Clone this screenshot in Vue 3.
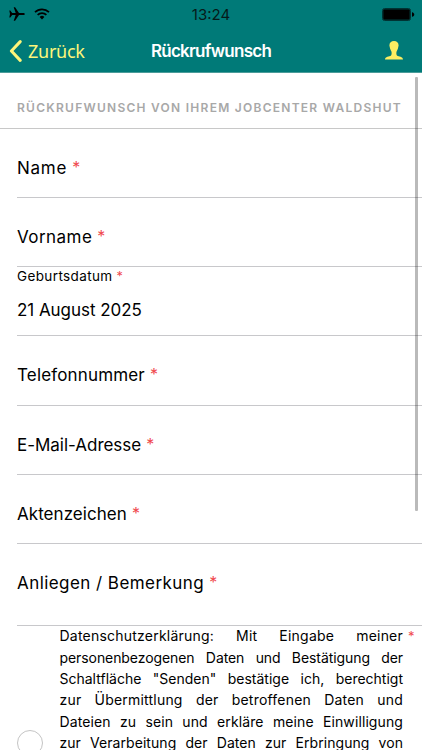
<template>
  <div class="screen">
    <header class="top">
      <div class="status">
        <div class="status-left">
          <svg class="plane" viewBox="0 0 16 14" aria-hidden="true">
            <path d="M.3 3.400h1L3.200 5.900h3.500L4.700.3h1.400L10 5.900h4c1.100 0 1.900.5 1.900 1.100s-.8 1.100-1.900 1.100h-4l-3.900 5.600H4.700l2-5.600H3.200L1.300 10.600h-1L1 7z" />
          </svg>
          <svg class="wifi" viewBox="0 0 16 12" aria-hidden="true">
            <path d="M1 4.200a10 10 0 0 1 14 0M3.600 6.900a6.300 6.300 0 0 1 8.800 0" />
            <path class="wifi-dot" d="M5.600 9a3.500 3.500 0 0 1 4.800 0L8 11.600z" />
          </svg>
        </div>
        <span class="clock">13:24</span>
        <svg class="battery" viewBox="0 0 33 13" aria-hidden="true">
          <rect class="battery-frame" x=".5" y=".5" width="28" height="12" rx="2" />
          <rect x="1.2" y="1.2" width="26.6" height="10.600" rx="1" />
          <path d="M30 4.200c3 .6 3 4 0 4.600z" />
        </svg>
      </div>

      <nav class="bar">
        <a class="back">
          <svg class="chevron" viewBox="0 0 13 22" aria-hidden="true">
            <path d="M11.200 1.600 2.400 11l8.800 9.400" />
          </svg>
          <span>Zurück</span>
        </a>
        <h1 class="title">Rückrufwunsch</h1>
        <svg class="user" viewBox="0 0 18 19" aria-hidden="true">
          <path d="M9 0C6.200 0 4.400 1.500 4.400 4.500c0 .7.300 1 .4 1.800.200 1.700 1 2.900 1.600 4.200.4 1.100.4 3.400-.6 4.300C4.500 15.800 0 15.300 0 18.600h18c0-3.300-4.500-2.800-5.800-3.800-1-.9-1-3.200-.6-4.300.6-1.300 1.400-2.500 1.600-4.200.1-.8.4-1.100.4-1.800C13.600 1.500 11.800 0 9 0z" />
        </svg>
      </nav>
    </header>

    <main class="content">
      <h2 class="section">Rückrufwunsch von Ihrem Jobcenter Waldshut</h2>

      <div
        v-for="field in fields"
        :key="field.label"
        class="field"
        :class="{ filled: field.value, tall: field.tall }"
      >
        <label class="label">
          <span :style="{ letterSpacing: field.spacing + 'px' }">{{ field.label }}</span>
          <span class="star">*</span>
        </label>
        <div v-if="field.value" class="value">{{ field.value }}</div>
      </div>

      <div class="consent">
        <span class="radio"></span>
        <p class="consent-text">
          <span
            v-for="line in consent"
            :key="line.text"
            class="line"
            :style="{ letterSpacing: line.spacing + 'px' }"
          >{{ line.text }}</span>
        </p>
        <span class="star consent-star">*</span>
      </div>
    </main>

    <div class="scrollbar"></div>
  </div>
</template>

<script setup>
const fields = [
  { label: 'Name', spacing: 0.75 },
  { label: 'Vorname', spacing: 0.45 },
  { label: 'Geburtsdatum', value: '21 August 2025', spacing: 0.38 },
  { label: 'Telefonnummer', spacing: 0.16 },
  { label: 'E-Mail-Adresse', spacing: -0.02 },
  { label: 'Aktenzeichen', spacing: 0.05 },
  { label: 'Anliegen / Bemerkung', spacing: 0.44, tall: true }
];

const consent = [
  { text: 'Datenschutzerklärung: Mit Eingabe meiner', spacing: 0.22 },
  { text: 'personenbezogenen Daten und Bestätigung der', spacing: -0.08 },
  { text: 'Schaltfläche "Senden" bestätige ich, berechtigt', spacing: 0 },
  { text: 'zur Übermittlung der betroffenen Daten und', spacing: 0.2 },
  { text: 'Dateien zu sein und erkläre meine Einwilligung', spacing: 0.1 },
  { text: 'zur Verarbeitung der Daten zur Erbringung von', spacing: 0.05 }
];
</script>

<style>
body {
  margin: 0;
  background: #fff;
}
</style>

<style scoped>
.screen {
  position: relative;
  width: 422px;
  height: 750px;
  overflow: hidden;
  background: #fff;
  color: #000;
  font-family: Inter, "Liberation Sans", sans-serif;
  font-weight: 430;
}

/* Header */
.top {
  box-sizing: border-box;
  height: 73px;
  background: #007a78;
  border-bottom: 1px solid #4b9c9a;
}

.status {
  display: grid;
  grid-template-columns: 1fr auto 1fr;
  align-items: center;
  height: 28px;
  padding: 0 7px 0 9px;
}
.status-left {
  display: flex;
  align-items: center;
  gap: 9px;
}
.plane { width: 16px; height: 14px; }
.wifi { width: 16px; height: 12px; fill: none; stroke: #000; stroke-width: 1.7; }
.wifi-dot { fill: #000; stroke: none; }
.clock {
  padding-right: 2px;
  font-size: 15px;
  font-weight: 400;
  color: #061a1a;
}
.battery { width: 33px; height: 13px; justify-self: end; }
.battery-frame { fill: none; stroke: #033; }

.bar {
  display: grid;
  grid-template-columns: 1fr auto 1fr;
  align-items: center;
  height: 44px;
  padding: 1px 0 0;
}
.back {
  display: flex;
  align-items: center;
  gap: 6px;
  padding-left: 9px;
  color: #fdf57a;
  font-family: "Noto Sans", sans-serif;
  font-size: 18px;
  font-weight: 400;
  letter-spacing: -0.25px;
}
.chevron { width: 13px; height: 22px; fill: none; stroke: #fdf57a; stroke-width: 3; stroke-linecap: round; stroke-linejoin: round; }
.title {
  margin: 0;
  color: #fff;
  font-size: 17px;
  font-weight: 600;
  letter-spacing: -0.75px;
}
.user { width: 18px; height: 19px; margin: 0 19px 1px 0; justify-self: end; fill: #fdee62; }

/* Form */
.section {
  box-sizing: border-box;
  height: 56px;
  margin: 0;
  padding: 25px 0 0 17px;
  border-bottom: 1px solid #c8c8c8;
  color: #a8a8a8;
  font-size: 12px;
  line-height: 20px;
  font-weight: 600;
  letter-spacing: 1.26px;
  text-transform: uppercase;
  white-space: nowrap;
}

.field {
  box-sizing: border-box;
  height: 69.15px;
  margin-left: 17px;
  padding-top: 27px;
  border-bottom: 1px solid #c8c8cb;
}
.field.tall { height: 81.8px; }
.label {
  display: flex;
  gap: 5px;
  font-size: 17px;
  line-height: 24px;
}
.star {
  color: #f0484e;
  font-size: 0.94em;
}

.field.filled { padding-top: 0; }
.filled .label {
  gap: 4px;
  font-size: 13.5px;
  line-height: 19px;
}
.value {
  margin-top: 12px;
  font-size: 17px;
  line-height: 24px;
  letter-spacing: -0.05px;
}

/* Consent */
.consent {
  display: grid;
  grid-template-columns: 42.5px 343.5px auto;
  margin-left: 17px;
}
.radio {
  box-sizing: border-box;
  width: 26px;
  height: 26px;
  margin-top: 104px;
  border: 1px solid #c4c4c4;
  border-radius: 50%;
}
.consent-text {
  margin: -0.5px 0 0;
  font-size: 14px;
  line-height: 21.4px;
}
.line {
  display: block;
  text-align: justify;
  text-align-last: justify;
  white-space: nowrap;
}
.consent-star {
  padding-left: 5px;
  font-size: 13px;
  line-height: 20px;
}

.scrollbar {
  position: absolute;
  top: 77px;
  right: 4px;
  width: 3px;
  height: 434px;
  border-radius: 1px;
  background: rgba(0, 0, 0, 0.27);
}
</style>
